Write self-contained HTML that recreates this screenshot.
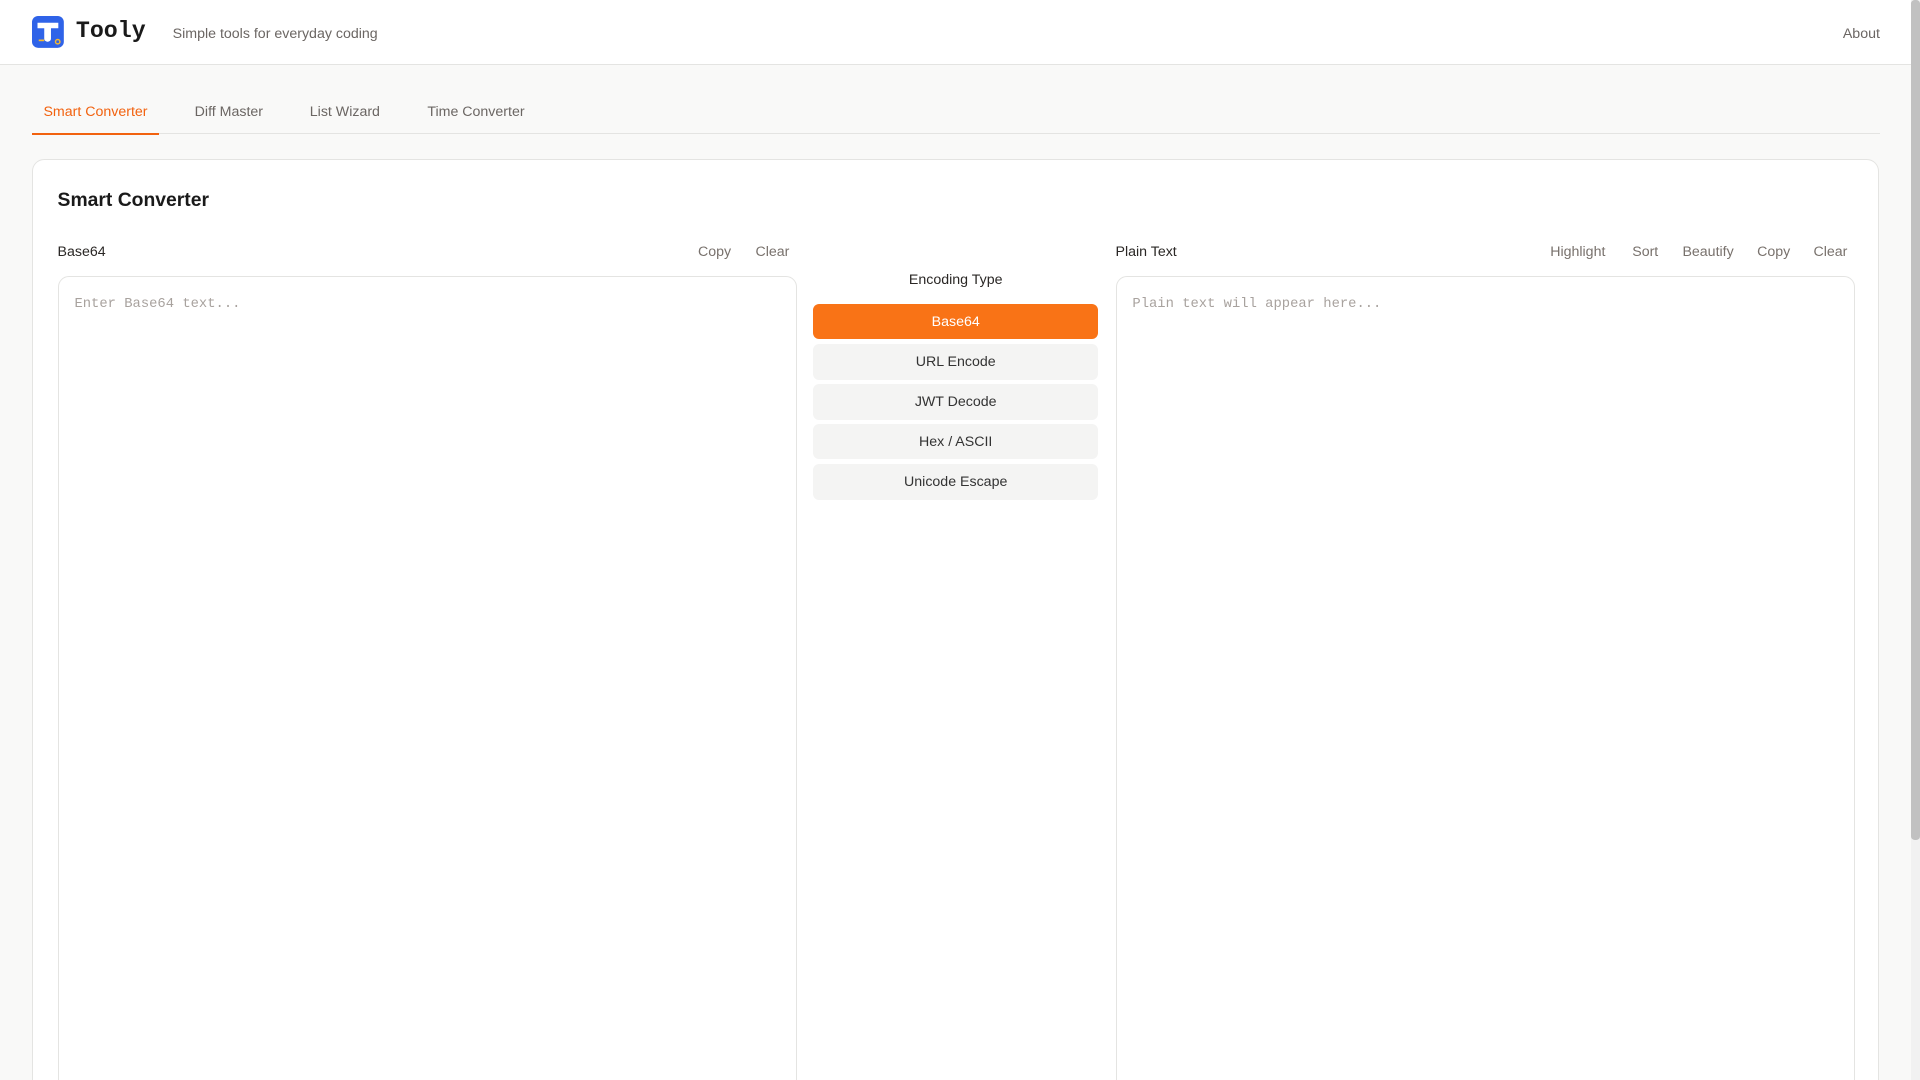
<!DOCTYPE html>
<html><head><meta charset="utf-8"><style>
html,body{margin:0;padding:0;overflow:hidden}
html{width:1920px;height:1080px}
body{width:1568px;height:882px;overflow:hidden;zoom:1.22449;background:#f9f9f8;font-family:"Liberation Sans",sans-serif;position:relative}
.hdr{position:absolute;left:0;top:0;width:1561px;height:52px;background:#fff;border-bottom:1px solid #e4e4e2}
.abs{position:absolute;white-space:nowrap}
.sb{position:absolute;left:1561px;top:0;width:7px;height:882px;background:#f1f1f1}
.sb div{position:absolute;left:0;top:0;width:7px;height:686px;background:#c1c1c1;border-radius:3px}
.tabs{position:absolute;left:26px;top:70px;width:1509px;height:39px;border-bottom:1px solid #e4e4e2}
.tab{position:absolute;top:0;height:39px;line-height:43px;font-size:11.6px;color:#6b6663}
.tab.on{color:#f2620f;border-bottom:2px solid #f2620f;height:39px}
.card{position:absolute;left:26px;top:130px;width:1507px;height:800px;background:#fff;border:1px solid #e4e4e2;border-radius:10px}
.ta{position:absolute;top:225px;height:700px;background:#fff;border:1px solid #e4e4e2;border-radius:9px;box-sizing:border-box}
.ph{position:absolute;left:13px;top:16px;font-family:"Liberation Mono",monospace;font-size:11.3px;color:#a8a29e}
.lbl{font-size:11.6px;color:#2a2725}
.act{font-size:11.6px;color:#78716c}
.btn{position:absolute;left:664px;width:233px;height:29px;border-radius:5px;background:#f4f4f3;color:#333;font-size:11.6px;text-align:center;line-height:31px}
.btn.on{background:#f97316;color:#fff}
</style></head><body>
<div class="hdr">
<svg class="abs" style="left:26px;top:13px" width="26" height="26" viewBox="0 0 26 26">
<rect width="26" height="26" rx="5" fill="#2f63e8"/>
<path d="M4.5 5.5h17v4.5h-6v8.5a2.5 2.5 0 0 1-2.5 2.5h-0.5a2.5 2.5 0 0 1-2.5-2.5V10h-5.5z" fill="#fff"/>
<rect x="5.5" y="19.2" width="4.5" height="1.4" fill="#f5b82e"/>
<circle cx="21" cy="21" r="1.8" fill="none" stroke="#f5b82e" stroke-width="1.2"/>
</svg>
<div class="abs" style="left:62px;top:15px;font-family:'Liberation Mono',monospace;font-weight:bold;font-size:19px;color:#1a1a1a">Tooly</div>
<div class="abs" style="left:141px;top:21px;font-size:11.6px;color:#6b6663">Simple tools for everyday coding</div>
<div class="abs" style="left:1505px;top:21px;font-size:11.6px;color:#6b6663">About</div>
</div>
<div class="tabs">
<div class="tab on" style="left:0;width:104px;text-align:center">Smart Converter</div>
<div class="tab" style="left:133px">Diff Master</div>
<div class="tab" style="left:227px">List Wizard</div>
<div class="tab" style="left:323px">Time Converter</div>
</div>
<div class="card"></div>
<div class="abs" style="left:47px;top:154px;font-size:15.8px;font-weight:bold;color:#1a1a1a">Smart Converter</div>
<div class="abs lbl" style="left:47px;top:199px">Base64</div>
<div class="abs act" style="left:570px;top:199px">Copy</div>
<div class="abs act" style="left:617px;top:199px">Clear</div>
<div class="abs lbl" style="left:911px;top:199px">Plain Text</div>
<div class="abs act" style="left:1266px;top:199px">Highlight</div>
<div class="abs act" style="left:1333px;top:199px">Sort</div>
<div class="abs act" style="left:1374px;top:199px">Beautify</div>
<div class="abs act" style="left:1435px;top:199px">Copy</div>
<div class="abs act" style="left:1481px;top:199px">Clear</div>
<div class="ta" style="left:47px;width:604px"><div class="ph">Enter Base64 text...</div></div>
<div class="ta" style="left:911px;width:604px"><div class="ph">Plain text will appear here...</div></div>
<div class="abs lbl" style="left:664px;width:233px;text-align:center;top:222px">Encoding Type</div>
<div class="btn on" style="top:248px">Base64</div>
<div class="btn" style="top:281px">URL Encode</div>
<div class="btn" style="top:314px">JWT Decode</div>
<div class="btn" style="top:346px">Hex / ASCII</div>
<div class="btn" style="top:379px">Unicode Escape</div>
<div class="sb"><div></div></div>
</body></html>
